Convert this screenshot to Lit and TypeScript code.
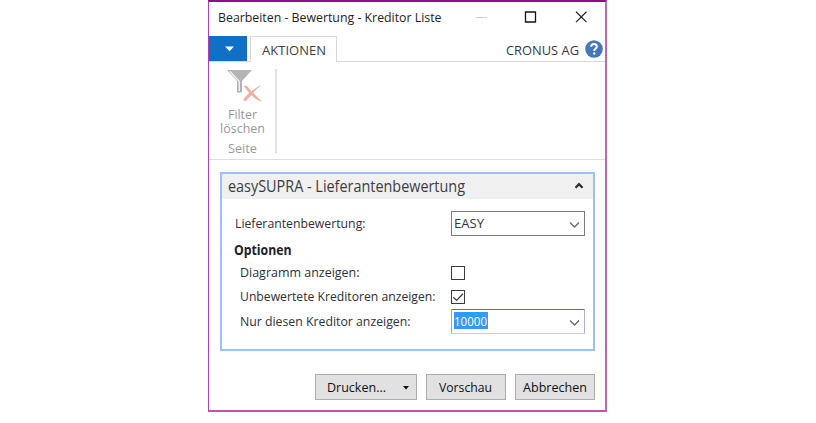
import { LitElement, html, css } from "lit";
import { customElement, property } from "lit/decorators.js";

/** One line of text set to a given width; its baseline lies 15px below its top. */
@customElement("fit-text")
class FitText extends LitElement {
  @property() text = "";
  @property({ type: Number }) width = 50;
  static styles = css`
    :host { display: block; height: 20px; flex: none; }
    svg { display: block; overflow: visible; }
    text { fill: currentColor; }
  `;
  render() {
    return html`<svg width=${this.width} height="20">
      <text x="0" y="15" textLength=${this.width} lengthAdjust="spacingAndGlyphs">${this.text}</text>
    </svg>`;
  }
}

@customElement("combo-field")
class ComboField extends LitElement {
  @property() value = "";
  @property({ type: Number }) width = 30;
  @property({ type: Boolean, reflect: true }) active = false;
  static styles = css`
    :host { display: flex; box-sizing: border-box; width: 134px; height: 25px; flex: none;
      border: 1px solid #7c7c80; background: #fff; padding: 1px 4px 0 2px;
      justify-content: space-between; color: #33333c; }
    :host([active]) { border-color: #7464a8 #b5abd3 #d2cbe4 #a79bcb; border-radius: 1px; padding-top: 2px; }
    .value { height: 20px; }
    :host([active]) .value { background: #3399ff; color: #fff; height: 17px; border-right: 1px solid #c87838; }
    :host([active]) fit-text { margin-top: -1px; }
    svg { margin-top: 7px; }
    :host([active]) svg { margin-top: 6px; }
  `;
  render() {
    return html`<div class="value"><fit-text .text=${this.value} .width=${this.width}></fit-text></div>
      <svg width="11" height="9" viewBox="0 0 11 9"><path d="M1 2.5 5.5 7 10 2.5" fill="none" stroke="#66666c" stroke-width="1.3"/></svg>`;
  }
}

@customElement("check-field")
class CheckField extends LitElement {
  @property({ type: Boolean }) checked = false;
  static styles = css`
    :host { display: block; box-sizing: border-box; width: 14px; height: 14px; border: 1px solid #3c3c3c; background: #fff; }
    svg { display: block; }
  `;
  render() {
    return html`<svg width="12" height="12">${this.checked
      ? html`<svg width="12" height="12"><path d="M1.3 6.2 4.6 9.4 11 2.8" fill="none" stroke="#3c3c3c" stroke-width="1.3"/></svg>` : null}</svg>`;
  }
}

@customElement("app-root")
class AppRoot extends LitElement {
  static styles = css`
    :host { display: block; width: 816px; height: 423px; background: #fff; overflow: hidden;
      font: 13.4px "Open Sans", "Noto Sans", sans-serif; color: #1e1e24; }
    * { box-sizing: border-box; }
    .window { width: 399.4px; height: 412px; margin-left: 207.5px; border: 1px solid #b43aa8; border-width: 2px 2px 2px 1px;
      border-color: #960a88 #c062b6 #b957b0 #b040a4; }
    .title { height: 34px; display: flex; padding: 5px 17px 0 9px; }
    .controls { margin: 1px 0 0 auto; display: block; }
    .tabs { height: 26px; display: flex; border-bottom: 1px solid #d9d9d9; }
    .menu { width: 38px; height: 25px; background: #1070c8; flex: none; }
    .menu svg { display: block; }
    .tab { width: 87px; height: 26px; margin-left: 3.5px; padding: 3px 0 0 11px; border: 1px solid #d9d9d9; border-bottom: 0; background: #fff; color: #404048; }
    .company { margin-left: auto; padding-top: 4px; color: #383840; }
    .help { display: block; margin: 3px 1.5px 0 6px; flex: none; }
    .ribbon { height: 98px; border-bottom: 1px solid #dedede; padding-top: 7px; }
    .group { width: 68px; height: 84px; border-right: 2px solid #e2e2e2; color: #999; display: flex; flex-direction: column; align-items: center; }
    .group svg { display: block; flex: none; }
    .group fit-text { margin: -6px 0 0 2px; }
    .group .section { margin-top: 0; }
    .panel { width: 375px; height: 179px; margin: 12px 0 0 11.5px; border: 2px solid #9bc0fb; }
    .head { height: 25px; background: #f0f0f0; display: flex; justify-content: space-between; padding: 3px 9px 0 5.5px; font-size: 15.4px; color: #3c3c44; }
    .row { display: grid; grid-template-columns: 216px 134px; padding-left: 13px; color: #303038; }
    .row.inner { padding-left: 18px; grid-template-columns: 211px 134px; }
    .main { height: 41px; padding-top: 12px; }
    .main fit-text { margin-top: 1.5px; }
    .heading { height: 25px; padding-left: 11.5px; font-weight: 700; color: #202028; }
    .check { height: 24px; }
    .check check-field { margin-top: 1px; }
    .check fit-text { margin-top: -3px; }
    .last { height: 28px; margin-top: -4px; }
    .last fit-text { margin-top: 2px; }
    .buttons { display: flex; justify-content: flex-end; margin-top: 23px; padding-right: 10px; }
    .button { height: 26px; border: 1px solid #adadad; background: #e1e1e1; display: flex; justify-content: center; padding-top: 2px; width: 80px; color: #101014; }
    .button + .button { margin-left: 9px; }
    .split { width: 102px; justify-content: flex-start; padding-left: 11px; }
    .split svg { display: block; margin: 8px 0 0 16px; }
  `;
  render() {
    return html`<div class="window">
      <div class="title">
        <fit-text text="Bearbeiten - Bewertung - Kreditor Liste" width="223.5"></fit-text>
        <svg class="controls" width="112" height="18" viewBox="0 0 112 18" fill="none">
          <path d="M0 9.5H11" stroke="#cfcfcf"/><path d="M49.5 4h10v10h-10z" stroke="#151515" stroke-width="1.3"/>
          <path d="M100 3.7 110.5 14.1M110.5 3.7 100 14.1" stroke="#222" stroke-width="1.2"/>
        </svg>
      </div>
      <div class="tabs">
        <div class="menu"><svg width="38" height="25"><path d="M16 10.5h9l-4.5 4.8z" fill="#fff"/></svg></div>
        <div class="tab"><fit-text text="AKTIONEN" width="64"></fit-text></div>
        <div class="company"><fit-text text="CRONUS AG" width="73"></fit-text></div>
        <svg class="help" width="18" height="20" viewBox="0 0 18 20">
          <circle cx="9" cy="10" r="8.8" fill="#4479b5"/>
          <path d="M6.1 7.8C6.2 3.9 12 4.2 11.9 7.5 11.8 9.6 9.2 9.5 9.2 12" fill="none" stroke="#fff" stroke-width="2"/><circle cx="9.2" cy="14.5" r="1.2" fill="#fff"/>
        </svg>
      </div>
      <div class="ribbon"><div class="group">
        <svg width="68" height="41" viewBox="0 0 68 41">
          <path d="M19 1H44L34 12V23.5H29V12z" fill="#b4b4b4"/>
          <path d="M22 2.5 31.3 12.5V22" fill="none" stroke="#f4f4f4" stroke-width="1.3"/>
          <path d="M35.8 17.3c3-2.2 4.5 1.6 8 5.1 3.2-3.3 6-5.1 9.8-5.9-3.5 2.2-5.9 4.4-8.1 7.2 2.3 2.8 5 5.5 8.5 8.8-4.9-1.2-7.7-3.4-10.6-6.6-2.3 2.5-4 4.1-5.3 6.1-1.8.4-2.9-.4-2.6-1.5 1.6-2.6 3.2-4.5 5.6-6.8-1.9-2.3-3.4-4.2-5.3-6.4z" fill="#eeb0a2"/>
        </svg>
        <fit-text text="Filter" width="29"></fit-text>
        <fit-text text="löschen" width="45"></fit-text>
        <fit-text class="section" text="Seite" width="29"></fit-text>
      </div></div>
      <div class="panel">
        <div class="head"><fit-text text="easySUPRA - Lieferantenbewertung" width="237"></fit-text>
          <svg width="10" height="18"><path d="M1.5 10.8 5 7.2 8.5 10.8" fill="none" stroke="#2c2c2c" stroke-width="2.2"/></svg></div>
        <div class="row main"><fit-text text="Lieferantenbewertung:" width="130.5"></fit-text><combo-field value="EASY" width="30"></combo-field></div>
        <div class="heading"><fit-text text="Optionen" width="57.5"></fit-text></div>
        <div class="row inner check"><fit-text text="Diagramm anzeigen:" width="119.5"></fit-text><check-field></check-field></div>
        <div class="row inner check"><fit-text text="Unbewertete Kreditoren anzeigen:" width="195.5"></fit-text><check-field checked></check-field></div>
        <div class="row inner last"><fit-text text="Nur diesen Kreditor anzeigen:" width="170.5"></fit-text><combo-field active value="10000" width="33"></combo-field></div>
      </div>
      <div class="buttons">
        <div class="button split"><fit-text text="Drucken..." width="59"></fit-text><svg width="8" height="6"><path d="M1 1h6L4 4.5z" fill="#111"/></svg></div>
        <div class="button"><fit-text text="Vorschau" width="53"></fit-text></div>
        <div class="button"><fit-text text="Abbrechen" width="64"></fit-text></div>
      </div>
    </div>`;
  }
}
